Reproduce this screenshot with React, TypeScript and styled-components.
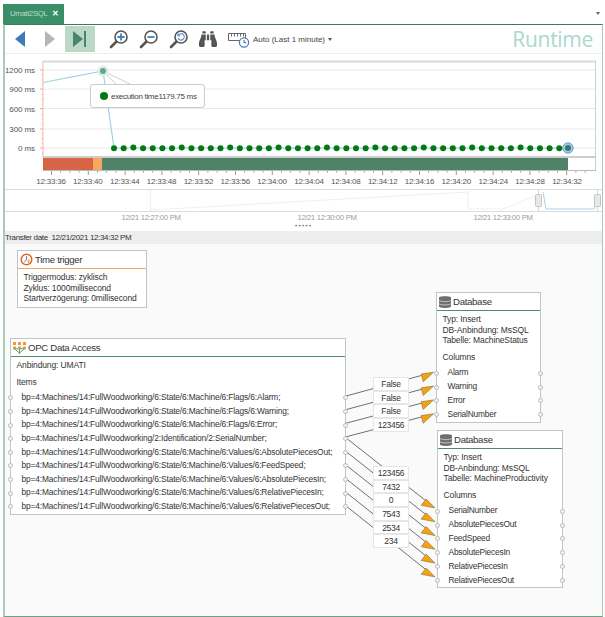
import React from 'react'
import styled, { createGlobalStyle } from 'styled-components'
import { FaBinoculars } from 'react-icons/fa'

const FONT = `"Liberation Sans", Arial, sans-serif`

const GlobalStyle = createGlobalStyle`
    html, body {
        margin: 0;
        padding: 0;
        background: #fff;
        font-family: ${FONT};
    }
`

const AXIS_LABELS = [
    '12:33:36', '12:33:40', '12:33:44', '12:33:48', '12:33:52', '12:33:56', '12:34:00', '12:34:04',
    '12:34:08', '12:34:12', '12:34:16', '12:34:20', '12:34:24', '12:34:28', '12:34:32',
]
const Y_LABELS = [
    { text: '1200 ms', y: 70 },
    { text: '900 ms', y: 89 },
    { text: '600 ms', y: 108.5 },
    { text: '300 ms', y: 129 },
    { text: '0 ms', y: 148 },
]
const OPC_ITEMS = [
    'bp=4:Machines/14:FullWoodworking/6:State/6:Machine/6:Flags/6:Alarm;',
    'bp=4:Machines/14:FullWoodworking/6:State/6:Machine/6:Flags/6:Warning;',
    'bp=4:Machines/14:FullWoodworking/6:State/6:Machine/6:Flags/6:Error;',
    'bp=4:Machines/14:FullWoodworking/2:Identification/2:SerialNumber;',
    'bp=4:Machines/14:FullWoodworking/6:State/6:Machine/6:Values/6:AbsolutePiecesOut;',
    'bp=4:Machines/14:FullWoodworking/6:State/6:Machine/6:Values/6:FeedSpeed;',
    'bp=4:Machines/14:FullWoodworking/6:State/6:Machine/6:Values/6:AbsolutePiecesIn;',
    'bp=4:Machines/14:FullWoodworking/6:State/6:Machine/6:Values/6:RelativePiecesIn;',
    'bp=4:Machines/14:FullWoodworking/6:State/6:Machine/6:Values/6:RelativePiecesOut;',
]
const STATUS_COLUMNS = ['Alarm', 'Warning', 'Error', 'SerialNumber']
const PRODUCTIVITY_COLUMNS = ['SerialNumber', 'AbsolutePiecesOut', 'FeedSpeed', 'AbsolutePiecesIn', 'RelativePiecesIn', 'RelativePiecesOut']
const STATUS_VALUES = ['False', 'False', 'False', '123456']
const PRODUCTIVITY_VALUES = ['123456', '7432', '0', '7543', '2534', '234']

// canvas starts at page (5, 245)
const CANVAS_X = 5
const CANVAS_Y = 245

const rowY = (i: number) => 397.3 + i * 13.6
const CONNECTIONS = [
    ...[0, 1, 2, 3].map((i) => ({ x1: 345, y1: rowY(i), x2: 436, y2: 372.5 + i * 13.9 })),
    ...[3, 4, 5, 6, 7, 8].map((i, k) => ({ x1: 345, y1: rowY(i), x2: 437, y2: 510.5 + k * 13.8 })),
]

// the wire ends on the arrow's upper edge, the third corner hangs below it
const Wire: React.FC<{ x1: number; y1: number; x2: number; y2: number }> = ({ x1, y1, x2, y2 }) => {
    const len = Math.hypot(x2 - x1, y2 - y1)
    const ux = (x2 - x1) / len
    const uy = (y2 - y1) / len
    const tipX = x2 - ux * 2.5
    const tipY = y2 - uy * 2.5
    const ax = x2 - ux * 15
    const ay = y2 - uy * 15
    const nx = -uy
    const ny = ux
    return (
        <g>
            <line x1={x1} y1={y1} x2={ax} y2={ay} stroke="#707070" strokeWidth="1" />
            <polygon
                points={`${tipX},${tipY} ${ax - nx * 1.5},${ay - ny * 1.5} ${ax + nx * 6.5},${ay + ny * 6.5}`}
                fill="#f5a20c"
                stroke="#7d7046"
                strokeWidth="0.6"
            />
        </g>
    )
}

const Chart: React.FC = () => {
    const points: number[] = []
    for (let x = 114; x < 560; x += 9.68) points.push(x)
    const ticks: number[] = []
    for (let x = 51.5; x < 590; x += 9.2) ticks.push(x)
    const yTicks: number[] = []
    for (let y = 70; y < 156; y += 4.9) yTicks.push(y)
    return (
        <svg width="597" height="135" viewBox="5 54 597 135">
            {Y_LABELS.map((l) => (
                <g key={l.text}>
                    <line x1="43" x2="596" y1={l.y} y2={l.y} stroke="#e9e9e9" />
                    <line x1="40" x2="43" y1={l.y} y2={l.y} stroke="#f0a898" />
                    <text x="35" y={l.y + 3} textAnchor="end" fontSize="8" letterSpacing="-0.1" fill="#555" fontFamily={FONT}>{l.text}</text>
                </g>
            ))}
            {yTicks.map((y) => (
                <line key={y} x1="41.5" x2="43" y1={y} y2={y} stroke="#f5c5b8" />
            ))}
            <line x1="43" x2="596" y1="61.5" y2="61.5" stroke="#d9d9d9" strokeWidth="2" />
            <line x1="595.5" x2="595.5" y1="61" y2="170" stroke="#cfcfcf" />
            <line x1="43" x2="43" y1="61" y2="157" stroke="#f5b5a5" />
            <polyline points="43,82.5 103,71 114,148 568,148" fill="none" stroke="#9fd0e3" strokeWidth="1.2" />
            <line x1="103" y1="71" x2="116" y2="84" stroke="#cfcfcf" />
            <line x1="103" y1="71" x2="130" y2="84" stroke="#cfcfcf" />
            <circle cx="103" cy="71" r="5.5" fill="#dcebf3" />
            <circle cx="103" cy="71" r="3" fill="#62ab77" />
            {points.map((x, i) => (
                <circle key={i} cx={x} cy={i % 5 === 2 ? 147.6 : 148.2} r="3" fill="#007a12" />
            ))}
            <circle cx="568" cy="148" r="5.2" fill="#a8c6e6" stroke="#6f9fd2" />
            <circle cx="568" cy="148" r="3" fill="#2f7f66" />
            <line x1="43" x2="596" y1="157" y2="157" stroke="#bdbdbd" strokeWidth="1.5" />
            <rect x="43" y="158" width="50" height="12" fill="#d76445" />
            <rect x="93" y="158" width="9" height="12" fill="#f6a95c" />
            <rect x="102" y="158" width="466" height="12" fill="#4f8268" />
            <line x1="43" x2="596" y1="170.5" y2="170.5" stroke="#bbb" />
            {ticks.map((x, i) => (
                <line key={x} x1={x} x2={x} y1="171" y2={i % 4 === 0 ? 175 : 172.5} stroke="#999" />
            ))}
            {AXIS_LABELS.map((t, i) => (
                <text key={t} x={51 + i * 36.85} y="184" textAnchor="middle" fontSize="8" letterSpacing="-0.2" fill="#555" fontFamily={FONT}>{t}</text>
            ))}
        </svg>
    )
}

const Navigator: React.FC = () => (
    <svg width="597" height="33" viewBox="5 190 597 33">
        <line x1="5" x2="602" y1="211.5" y2="211.5" stroke="#dcdcdc" />
        <line x1="150.5" x2="150.5" y1="190" y2="211" stroke="#f0f0f0" />
        <polyline points="150,210 468,192 468,209 503,209 535,196" fill="none" stroke="#efefef" />
        <polyline points="543,192 546,209 594,209 596,204" fill="none" stroke="#a9d3e4" />
        <line x1="538.5" x2="538.5" y1="190" y2="211" stroke="#d8d8d8" />
        <line x1="597.5" x2="597.5" y1="190" y2="211" stroke="#d8d8d8" />
        <rect x="535.5" y="194.5" width="6" height="12" rx="1" fill="#e8e8e8" stroke="#c4c4c4" />
        <rect x="594.5" y="194.5" width="6" height="12" rx="1" fill="#e8e8e8" stroke="#c4c4c4" />
        <text x="151" y="220" textAnchor="middle" fontSize="7.6" letterSpacing="-0.3" fill="#9a9a9a" fontFamily={FONT}>12/21 12:27:00 PM</text>
        <text x="327" y="220" textAnchor="middle" fontSize="7.6" letterSpacing="-0.3" fill="#9a9a9a" fontFamily={FONT}>12/21 12:30:00 PM</text>
        <text x="503" y="220" textAnchor="middle" fontSize="7.6" letterSpacing="-0.3" fill="#9a9a9a" fontFamily={FONT}>12/21 12:33:00 PM</text>
    </svg>
)

const Magnifier: React.FC<{ kind: 'plus' | 'minus' | 'reset' }> = ({ kind }) => (
    <svg width="20" height="20" viewBox="0 0 20 20">
        <line x1="8" y1="12" x2="2" y2="18" stroke="#555" strokeWidth="2.6" strokeLinecap="round" />
        <circle cx="12" cy="8" r="6" fill="#fff" stroke="#555" strokeWidth="1.6" />
        {kind === 'plus' && <path d="M12 4.5v7M8.5 8h7" stroke="#3f7fc0" strokeWidth="1.8" />}
        {kind === 'minus' && <path d="M8.5 8h7" stroke="#3f7fc0" strokeWidth="1.8" />}
        {kind === 'reset' && <path d="M9.5 6a3.2 3.2 0 1 1-.4 3M9 4.5V6.6h2.1" fill="none" stroke="#4f8fcb" strokeWidth="1.1" />}
    </svg>
)

const DatabaseIcon: React.FC = () => (
    <svg width="12" height="14" viewBox="0 0 12 14">
        <path d="M0 2.5C0 .8 12 .8 12 2.5V11.5C12 13.4 0 13.4 0 11.5Z" fill="#6e6e6e" />
        <path d="M0 5.5C2 7 10 7 12 5.5M0 8.8C2 10.3 10 10.3 12 8.8" fill="none" stroke="#d5d5d5" strokeWidth="0.8" />
    </svg>
)

const TimerIcon: React.FC = () => (
    <svg width="13" height="13" viewBox="0 0 13 13">
        <circle cx="6.5" cy="6.5" r="5.3" fill="#fff" stroke="#d9672f" strokeWidth="1.5" />
        <path d="M6.5 3.2V6.8L4.2 9" fill="none" stroke="#777" strokeWidth="1" />
        <path d="M8 6l2 1.5-1.5 3.5-1-2z" fill="#f3b04c" />
    </svg>
)

const OpcIcon: React.FC = () => (
    <svg width="13" height="12" viewBox="0 0 13 12">
        <g fill="#ee9a3a">
            <rect x="0" y="0" width="3" height="3" />
            <rect x="5" y="0" width="3" height="3" />
            <rect x="10" y="0" width="3" height="3" />
            <rect x="0" y="4.5" width="3" height="1.6" />
            <rect x="5" y="4.5" width="3" height="1.6" />
            <rect x="10" y="4.5" width="3" height="1.6" />
        </g>
        <path d="M0 6.8H13M1.5 6.8L6.5 11M11.5 6.8L6.5 11M6.5 6.8V12" fill="none" stroke="#6c9a5e" strokeWidth="1" />
    </svg>
)

const App: React.FC = () => (
    <Page>
        <GlobalStyle />
        <TabStrip>
            <Tab>
                Umati2SQL
                <TabClose>✕</TabClose>
            </Tab>
            <StripCaret />
        </TabStrip>
        <Frame>
            <Toolbar>
                <NavButton>
                    <svg width="10" height="16" viewBox="0 0 10 16"><path d="M10 0V16L0 8Z" fill="#3f7ab8" /></svg>
                </NavButton>
                <NavButton>
                    <svg width="10" height="16" viewBox="0 0 10 16"><path d="M0 0V16L10 8Z" fill="#b5b5b5" /></svg>
                </NavButton>
                <NavButton $active>
                    <svg width="14" height="16" viewBox="0 0 14 16"><path d="M0 0V16L10 8Z" fill="#47866a" /><rect x="11" y="0" width="2" height="16" fill="#47866a" /></svg>
                </NavButton>
                <ToolGroup>
                    <Magnifier kind="plus" />
                    <Magnifier kind="minus" />
                    <Magnifier kind="reset" />
                    <FaBinoculars size={18} color="#555" />
                </ToolGroup>
                <TimeRange>
                    <svg width="22" height="18" viewBox="0 0 22 18">
                        <path d="M.5 3.5h17v7H.5z M3.5 3.5v3M6.5 3.5v3M9.5 3.5v3M12.5 3.5v3M15.5 3.5v3" fill="none" stroke="#666" />
                        <circle cx="16" cy="12.5" r="4.6" fill="#fff" stroke="#3f7fc0" strokeWidth="1.2" />
                        <path d="M16 10v2.7h2.2" fill="none" stroke="#555" />
                    </svg>
                    <span>Auto (Last 1 minute)</span>
                    <SmallCaret />
                </TimeRange>
                <ModeLabel>Runtime</ModeLabel>
            </Toolbar>
            <ChartArea>
                <Chart />
                <Tooltip>
                    <TooltipDot />
                    execution time1179.75 ms
                </Tooltip>
            </ChartArea>
            <Navigator />
            <Sash>·····</Sash>
            <StatusBar>Transfer date&nbsp; 12/21/2021 12:34:32 PM</StatusBar>
            <Canvas>
                <Wires width="597" height="371" viewBox={`${CANVAS_X} ${CANVAS_Y} 597 371`}>
                    {CONNECTIONS.map((c, i) => (
                        <Wire key={i} {...c} />
                    ))}
                </Wires>
                <Node $x={17} $y={251} $w={130}>
                    <NodeHeader $accent="#f2a65a"><TimerIcon />Time trigger</NodeHeader>
                    <NodeBody $bottom={3}>
                        <Line>Triggermodus: zyklisch</Line>
                        <Line>Zyklus: 1000millisecond</Line>
                        <Line>Startverzögerung: 0millisecond</Line>
                    </NodeBody>
                </Node>
                <Node $x={10} $y={339} $w={336}>
                    <NodeHeader $accent="#4f8a6c"><OpcIcon />OPC Data Access</NodeHeader>
                    <NodeBody>
                        <Line>Anbindung: UMATI</Line>
                        <Section>Items</Section>
                        {OPC_ITEMS.map((item) => (
                            <ItemRow key={item}><Port $side="left" />{item}<Port $side="right" /></ItemRow>
                        ))}
                    </NodeBody>
                </Node>
                <Node $x={436} $y={293} $w={105}>
                    <NodeHeader $accent="#4f8a6c"><DatabaseIcon />Database</NodeHeader>
                    <NodeBody>
                        <Line>Typ: Insert</Line>
                        <Line>DB-Anbindung: MsSQL</Line>
                        <Line>Tabelle: MachineStatus</Line>
                        <Section>Columns</Section>
                        {STATUS_COLUMNS.map((c) => (
                            <ColumnRow key={c}><Port $side="left" />{c}<Port $side="right" /></ColumnRow>
                        ))}
                    </NodeBody>
                </Node>
                <Node $x={437} $y={431} $w={126}>
                    <NodeHeader $accent="#4f8a6c"><DatabaseIcon />Database</NodeHeader>
                    <NodeBody>
                        <Line>Typ: Insert</Line>
                        <Line>DB-Anbindung: MsSQL</Line>
                        <Line>Tabelle: MachineProductivity</Line>
                        <Section>Columns</Section>
                        {PRODUCTIVITY_COLUMNS.map((c) => (
                            <ColumnRow key={c}><Port $side="left" />{c}<Port $side="right" /></ColumnRow>
                        ))}
                    </NodeBody>
                </Node>
                <ValueStack $x={373} $y={378}>
                    {STATUS_VALUES.map((v, i) => <ValueBox key={i}>{v}</ValueBox>)}
                </ValueStack>
                <ValueStack $x={373} $y={467}>
                    {PRODUCTIVITY_VALUES.map((v, i) => <ValueBox key={i}>{v}</ValueBox>)}
                </ValueStack>
            </Canvas>
        </Frame>
    </Page>
)

const Page = styled.div`
    width: 605px;
    height: 617px;
    overflow: hidden;
    background: #fff;
    padding: 4px 2px 0 3px;
    box-sizing: border-box;
    display: flex;
    flex-direction: column;
    color: #333;
    font-size: 9px;
`
const TabStrip = styled.div`
    height: 20px;
    flex: none;
    display: flex;
    align-items: flex-start;
    justify-content: space-between;
`
const Tab = styled.div`
    width: 61px;
    height: 20px;
    background: #3a8f68;
    color: #b9dcc9;
    font-size: 7.8px;
    letter-spacing: -0.3px;
    line-height: 20px;
    padding: 0 5px 0 7px;
    box-sizing: border-box;
    display: flex;
    justify-content: space-between;
`
const TabClose = styled.span`
    color: #fff;
    font-size: 8px;
    font-weight: bold;
`
const StripCaret = styled.div`
    width: 0;
    height: 0;
    margin: 8px 3px 0 0;
    border-left: 2.5px solid transparent;
    border-right: 2.5px solid transparent;
    border-top: 3px solid #666;
`
const Frame = styled.div`
    flex: 1;
    min-height: 0;
    display: flex;
    flex-direction: column;
    border-top: 1.5px solid #3d7a5c;
    border-left: 2px solid #a9ccb9;
    border-right: 1px solid #a9ccb9;
    border-bottom: 1px solid #6f9f88;
`
const Toolbar = styled.div`
    height: 28px;
    flex: none;
    display: flex;
    align-items: center;
    border-bottom: 1px solid #eee;
`
const NavButton = styled.div<{ $active?: boolean }>`
    width: 30px;
    height: 26px;
    display: flex;
    align-items: center;
    justify-content: center;
    background: ${(p) => (p.$active ? '#bcd9c8' : 'transparent')};
`
const ToolGroup = styled.div`
    display: flex;
    align-items: center;
    gap: 10px;
    margin-left: 14px;
`
const TimeRange = styled.div`
    display: flex;
    align-items: center;
    gap: 3px;
    margin-left: 11px;
    font-size: 8px;
    color: #444;
`
const SmallCaret = styled.span`
    width: 0;
    height: 0;
    border-left: 2.5px solid transparent;
    border-right: 2.5px solid transparent;
    border-top: 3px solid #555;
`
const ModeLabel = styled.div`
    margin-left: auto;
    margin-right: 9px;
    font-family: "Open Sans", sans-serif;
    font-size: 21px;
    font-weight: 400;
    letter-spacing: -0.3px;
    color: #aad9cb;
`
const ChartArea = styled.div`
    position: relative;
    height: 135px;
    flex: none;
    border-bottom: 1px solid #dcdcdc;
`
const Tooltip = styled.div`
    position: absolute;
    left: 85px;
    top: 30px;
    width: 115px;
    height: 24px;
    box-sizing: border-box;
    display: flex;
    align-items: center;
    gap: 3px;
    padding-left: 9px;
    background: #fff;
    border: 1.5px solid #ccc;
    border-radius: 3px;
    font-size: 8px;
    letter-spacing: -0.3px;
    white-space: nowrap;
    color: #444;
`
const TooltipDot = styled.span`
    flex: none;
    width: 8px;
    height: 8px;
    border-radius: 50%;
    background: #007a12;
`
const Sash = styled.div`
    height: 8px;
    line-height: 6px;
    flex: none;
    text-align: center;
    font-size: 9px;
    letter-spacing: 0.5px;
    color: #555;
    font-weight: bold;
`
const StatusBar = styled.div`
    height: 13px;
    line-height: 13px;
    flex: none;
    background: #eeeeee;
    font-size: 8px;
    letter-spacing: -0.35px;
    color: #333;
`
const Canvas = styled.div`
    position: relative;
    flex: 1;
    min-height: 0;
    background: #fafafa;
`
const Wires = styled.svg`
    position: absolute;
    left: 0;
    top: 0;
`
const Node = styled.div<{ $x: number; $y: number; $w: number }>`
    position: absolute;
    left: ${(p) => p.$x - CANVAS_X}px;
    top: ${(p) => p.$y - CANVAS_Y}px;
    width: ${(p) => p.$w}px;
    box-sizing: border-box;
    background: #fff;
    border: 1px solid #c4c4c4;
`
const NodeHeader = styled.div<{ $accent: string }>`
    height: 17px;
    display: flex;
    align-items: center;
    gap: 2px;
    padding-left: 2px;
    font-size: 9.6px;
    letter-spacing: -0.3px;
    color: #333;
    border-bottom: 1px solid ${(p) => p.$accent};
`
const NodeBody = styled.div<{ $bottom?: number }>`
    padding: 3px 0 ${(p) => p.$bottom ?? 0}px 5.5px;
`
const Line = styled.div`
    height: 10.6px;
    line-height: 11px;
    font-size: 8.5px;
    letter-spacing: -0.12px;
    white-space: nowrap;
`
const Section = styled(Line)`
    margin-top: 6px;
    margin-bottom: 4px;
`
const ItemRow = styled.div`
    position: relative;
    height: 13.6px;
    line-height: 13.6px;
    padding-left: 5px;
    font-size: 8.4px;
    letter-spacing: -0.14px;
    white-space: nowrap;
`
const ColumnRow = styled(ItemRow)`
    height: 13.85px;
    line-height: 13.85px;
    letter-spacing: -0.2px;
`
const Port = styled.span<{ $side: 'left' | 'right' }>`
    position: absolute;
    top: 50%;
    ${(p) => (p.$side === 'left' ? 'left: -9px;' : 'right: -3px;')}
    width: 5px;
    height: 5px;
    margin-top: -2.5px;
    box-sizing: border-box;
    border-radius: 50%;
    background: #f4f4f4;
    border: 1px solid #bbb;
`
const ValueStack = styled.div<{ $x: number; $y: number }>`
    position: absolute;
    left: ${(p) => p.$x - CANVAS_X}px;
    top: ${(p) => p.$y - CANVAS_Y}px;
    display: flex;
    flex-direction: column;
`
const ValueBox = styled.div`
    width: 36px;
    height: 13.7px;
    line-height: 13px;
    box-sizing: border-box;
    text-align: center;
    font-size: 8.5px;
    letter-spacing: -0.3px;
    background: #fff;
    border: 1px solid #e6e6e6;
`

export default App
